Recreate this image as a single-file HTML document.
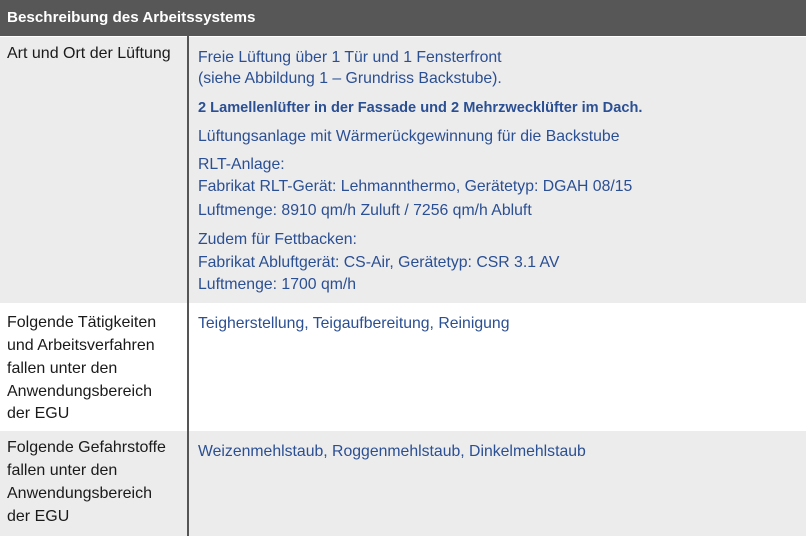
<!DOCTYPE html><html><head><meta charset="utf-8"><style>
body{margin:0;width:806px;height:536px;position:relative;overflow:hidden;background:#fff;font-family:"Liberation Sans",sans-serif}
.b{position:absolute;left:0;width:806px}
.t{position:absolute;white-space:nowrap;line-height:20px}
.l{left:7px;font-size:16px;color:#1a1a1a}
.r{left:198px;font-size:15.8px;color:#2b4f93;font-family:"Comic Sans MS","Liberation Sans",sans-serif}
</style></head><body>
<div class="b" style="top:0;height:36px;background:#575757"></div>
<div class="t" style="left:7px;top:8px;color:#fff;font-weight:bold;font-size:15.2px">Beschreibung des Arbeitssystems</div>
<div class="b" style="top:37px;height:266px;background:#ececec"></div>
<div class="b" style="top:431px;height:105px;background:#ececec"></div>
<div style="position:absolute;left:187px;top:36px;width:2px;height:500px;background:#555"></div>
<div class="t l" style="top:44px">Art und Ort der Lüftung</div>
<div class="t l" style="top:313px">Folgende Tätigkeiten</div>
<div class="t l" style="top:336px">und Arbeitsverfahren</div>
<div class="t l" style="top:359px">fallen unter den</div>
<div class="t l" style="top:382px">Anwendungsbereich</div>
<div class="t l" style="top:404px">der EGU</div>
<div class="t l" style="top:438px">Folgende Gefahrstoffe</div>
<div class="t l" style="top:461px">fallen unter den</div>
<div class="t l" style="top:484px">Anwendungsbereich</div>
<div class="t l" style="top:507px">der EGU</div>
<div class="t r" style="top:48px">Freie Lüftung über 1 Tür und 1 Fensterfront</div>
<div class="t r" style="top:69px">(siehe Abbildung 1 – Grundriss Backstube).</div>
<div class="t r" style="top:98px;font-weight:bold;font-size:14.6px">2 Lamellenlüfter in der Fassade und 2 Mehrzwecklüfter im Dach.</div>
<div class="t r" style="top:127px">Lüftungsanlage mit Wärmerückgewinnung für die Backstube</div>
<div class="t r" style="top:155px">RLT-Anlage:</div>
<div class="t r" style="top:177px">Fabrikat RLT-Gerät: Lehmannthermo, Gerätetyp: DGAH 08/15</div>
<div class="t r" style="top:201px">Luftmenge: 8910 qm/h Zuluft / 7256 qm/h Abluft</div>
<div class="t r" style="top:230px">Zudem für Fettbacken:</div>
<div class="t r" style="top:253px">Fabrikat Abluftgerät: CS-Air, Gerätetyp: CSR 3.1 AV</div>
<div class="t r" style="top:275px">Luftmenge: 1700 qm/h</div>
<div class="t r" style="top:314px">Teigherstellung, Teigaufbereitung, Reinigung</div>
<div class="t r" style="top:442px">Weizenmehlstaub, Roggenmehlstaub, Dinkelmehlstaub</div>
</body></html>
